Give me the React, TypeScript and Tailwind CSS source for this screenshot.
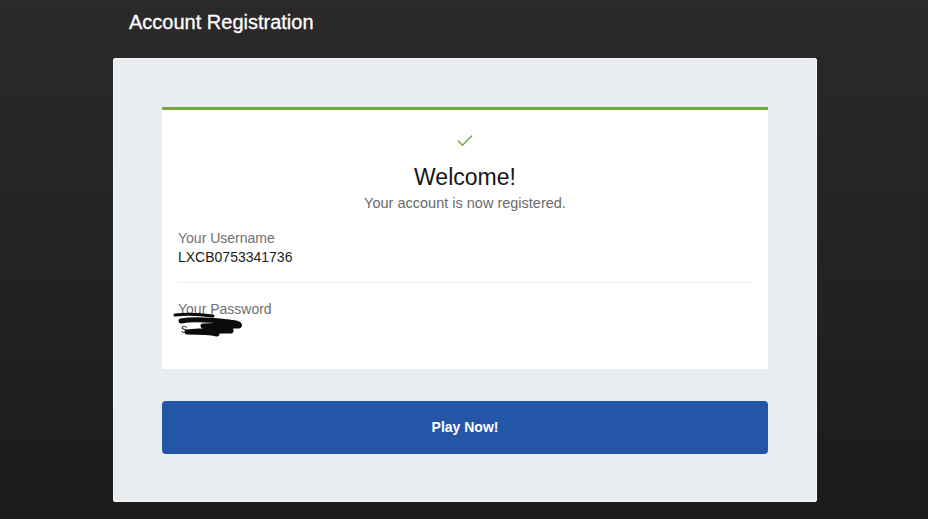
import { Check } from "lucide-react";

const Field = ({ label, children }: { label: string; children: React.ReactNode }) => (
    <div className="flex flex-col">
        <div className="text-[14px] leading-[18px] text-[#6f6f6f]">{label}</div>
        <div className="mt-px text-[14px] leading-[18px] text-[#1c1c1c]">{children}</div>
    </div>
);

const Scribble = () => (
    <div className="relative h-[18px] w-[80px]">
        <span className="absolute left-[3px] top-[1px] text-[13px] text-[#1c1c1c]">s</span>
        <svg
            className="absolute -left-[5px] -top-[7px]"
            width="80"
            height="26"
            viewBox="0 0 80 26"
        >
            <path
                d="M2 3 C 12 2, 24 2, 40 4"
                stroke="#0b0b0b"
                strokeWidth="3"
                strokeLinecap="round"
                fill="none"
            />
            <path
                d="M8 9 C 22 6, 40 8, 56 10 C 64 11, 68 12, 66 14 C 50 14, 40 13, 30 14 C 46 15, 60 16, 58 19 C 44 19, 30 18, 14 20 C 24 20, 40 21, 44 22"
                stroke="#0b0b0b"
                strokeWidth="5"
                strokeLinecap="round"
                strokeLinejoin="round"
                fill="none"
            />
        </svg>
    </div>
);

const Card = () => (
    <div className="h-[262px] border-t-[3px] border-[#74a83c] bg-white px-4">
        <div className="flex flex-col items-center pt-[21px]">
            <Check className="h-5 w-5 text-[#7aa54a]" strokeWidth={1.8} />
            <h1 className="mt-[12px] text-[23px] leading-[28px] text-[#161616]">Welcome!</h1>
            <p className="mt-[3px] text-[14.5px] leading-[18px] text-[#6a6a6a]">
                Your account is now registered.
            </p>
        </div>
        <div className="mt-[17px]">
            <Field label="Your Username">LXCB0753341736</Field>
        </div>
        <div className="mt-4 border-t border-[#ececec]" />
        <div className="mt-[17px]">
            <Field label="Your Password">
                <Scribble />
            </Field>
        </div>
    </div>
);

export default function App() {
    return (
        <div className="h-[519px] w-full overflow-hidden bg-gradient-to-b from-[#2c292a] to-[#1c1b1c] font-['Liberation_Sans',sans-serif]">
            <div className="flex justify-center pl-[2px]">
                <div className="w-[704px]">
                    <div className="pl-4 pt-[10px] text-[20px] leading-[24px] text-white [-webkit-text-stroke:0.3px_white]">
                        Account Registration
                    </div>
                    <div className="mt-[24px] rounded-[2px] border border-[#f5f7f8] bg-[#e9edf0] px-[48px] pb-[47px] pt-[48px]">
                        <Card />
                        <button className="mt-8 flex h-[53px] w-full items-center justify-center rounded-[4px] bg-[#2456a8] text-[14px] font-bold text-white">
                            Play Now!
                        </button>
                    </div>
                </div>
            </div>
        </div>
    );
}
